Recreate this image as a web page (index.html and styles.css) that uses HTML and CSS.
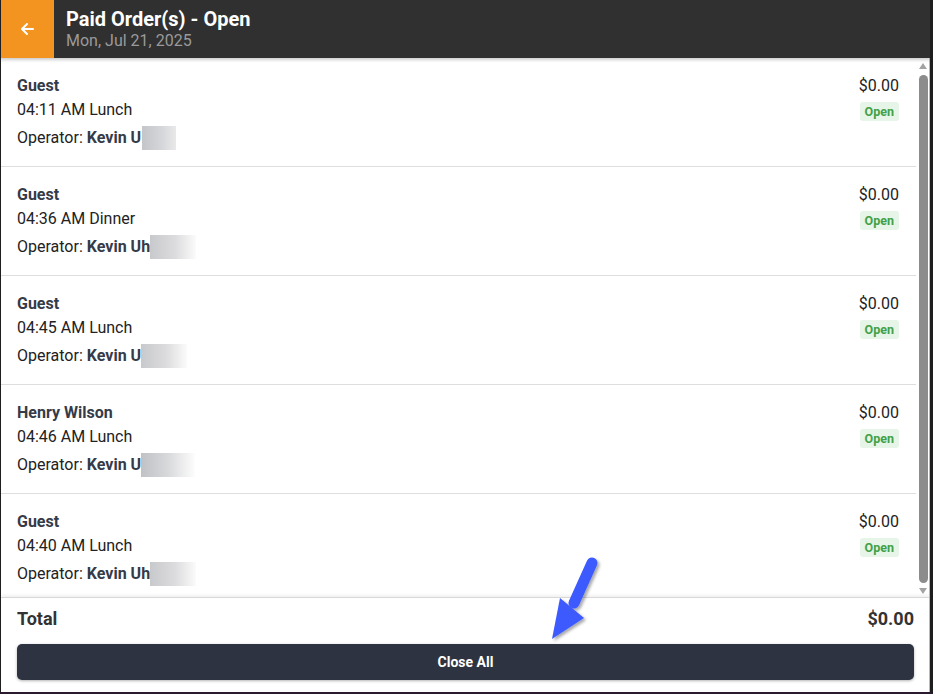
FILE: index.html
```html
<!DOCTYPE html>
<html lang="en">
<head>
    <meta charset="UTF-8">
    <meta name="viewport" content="width=device-width, initial-scale=1.0">
    <title>Paid Order(s) - Open</title>
    <link rel="stylesheet" href="styles.css">
</head>
<body>
    <div class="frame">
        <div class="header">
            <a href="#" class="back-btn">
                <svg width="14" height="14" viewBox="0 0 14 14"><path d="M13 7H2.5M7 2L2 7l5 5" fill="none" stroke="#fff" stroke-width="2" stroke-linecap="round" stroke-linejoin="round"/></svg>
            </a>
            <div class="header-text">
                <div class="title">Paid Order(s) - Open</div>
                <div class="subtitle">Mon, Jul 21, 2025</div>
            </div>
        </div>
        <div class="body">
            <div class="list">
                <div class="order">
                    <div class="order-info">
                        <div class="name">Guest</div>
                        <div class="time">04:11 AM Lunch</div>
                        <div class="operator">Operator: <b>Kevin U</b><span class="redact r1"></span></div>
                    </div>
                    <div class="order-side">
                        <div class="amount">$0.00</div>
                        <span class="badge">Open</span>
                    </div>
                </div>
                <div class="order">
                    <div class="order-info">
                        <div class="name">Guest</div>
                        <div class="time">04:36 AM Dinner</div>
                        <div class="operator">Operator: <b>Kevin Uh</b><span class="redact r2"></span></div>
                    </div>
                    <div class="order-side">
                        <div class="amount">$0.00</div>
                        <span class="badge">Open</span>
                    </div>
                </div>
                <div class="order">
                    <div class="order-info">
                        <div class="name">Guest</div>
                        <div class="time">04:45 AM Lunch</div>
                        <div class="operator">Operator: <b>Kevin U</b><span class="redact r2"></span></div>
                    </div>
                    <div class="order-side">
                        <div class="amount">$0.00</div>
                        <span class="badge">Open</span>
                    </div>
                </div>
                <div class="order">
                    <div class="order-info">
                        <div class="name">Henry Wilson</div>
                        <div class="time">04:46 AM Lunch</div>
                        <div class="operator">Operator: <b>Kevin U</b><span class="redact r3"></span></div>
                    </div>
                    <div class="order-side">
                        <div class="amount">$0.00</div>
                        <span class="badge">Open</span>
                    </div>
                </div>
                <div class="order">
                    <div class="order-info">
                        <div class="name">Guest</div>
                        <div class="time">04:40 AM Lunch</div>
                        <div class="operator">Operator: <b>Kevin Uh</b><span class="redact r2"></span></div>
                    </div>
                    <div class="order-side">
                        <div class="amount">$0.00</div>
                        <span class="badge">Open</span>
                    </div>
                </div>
            </div>
            <div class="scrollbar">
                <div class="scroll-up"></div>
                <div class="scroll-thumb"></div>
                <div class="scroll-down"></div>
            </div>
        </div>
        <div class="footer">
            <div class="total-row">
                <span>Total</span>
                <span>$0.00</span>
            </div>
            <button class="close-all">Close All</button>
        </div>
        <svg class="pointer" width="70" height="90" viewBox="0 0 70 90">
            <defs>
                <filter id="sh" x="-30%" y="-30%" width="160%" height="160%">
                    <feDropShadow dx="2" dy="2" stdDeviation="1.5" flood-color="#000" flood-opacity="0.35"/>
                </filter>
            </defs>
            <g filter="url(#sh)">
                <path d="M46 8 L28 48" stroke="#3d5afe" stroke-width="11" stroke-linecap="round" fill="none"/>
                <path d="M6 84 L14 43 L38 63 Z" fill="#3d5afe"/>
            </g>
        </svg>
    </div>
</body>
</html>
```

FILE: styles.css
```css
* {
    box-sizing: border-box;
}
body {
    margin: 0;
    font-family: Roboto, 'Liberation Sans', Arial, sans-serif;
    background: #fff;
}
.frame {
    position: relative;
    width: 933px;
    height: 694px;
    display: flex;
    flex-direction: column;
    border-left: 1px solid #1e1e1e;
    border-right: 3px solid #1e1e1e;
    border-bottom: 2px solid #2a1a2e;
    overflow: hidden;
    background: #fff;
}
.frame::after {
    content: '';
    position: absolute;
    top: 0;
    right: 0;
    width: 1px;
    height: 100%;
    background: #6fd8cf;
}
.header {
    height: 58px;
    display: flex;
    background: #303030;
    margin-left: -1px;
    box-shadow: 0 2px 3px rgba(0,0,0,0.2);
    position: relative;
    z-index: 2;
}
.back-btn {
    width: 54px;
    background: #f39320;
    display: flex;
    align-items: center;
    justify-content: center;
}
.header-text {
    padding: 7px 0 0 12px;
}
.title {
    color: #fff;
    font-size: 20px;
    font-weight: bold;
    line-height: 24px;
}
.subtitle {
    color: #9a9a9a;
    font-size: 16px;
    line-height: 19px;
}
.body {
    flex: 1;
    display: flex;
    min-height: 0;
}
.list {
    flex: 1;
    overflow: hidden;
}
.order {
    display: flex;
    justify-content: space-between;
    padding: 16px 16px 16px 16px;
    border-bottom: 1px solid #dedede;
}
.name {
    font-size: 16px;
    font-weight: bold;
    color: #353b48;
    line-height: 24px;
}
.time {
    font-size: 16px;
    color: #222;
    line-height: 24px;
}
.operator {
    font-size: 16px;
    color: #222;
    line-height: 24px;
    margin-top: 4px;
    display: flex;
    align-items: center;
}
.operator b {
    color: #353b48;
    margin-left: 4px;
}
.redact {
    display: inline-block;
    height: 24px;
    background: linear-gradient(90deg, #c4c5c9 0%, #d6d7da 60%, #e9e9ea 100%);
}
.r1 { width: 34px; margin-left: 1px; }
.r2 { width: 46px; background: linear-gradient(90deg, #c8c9cc 0%, #dcdcde 55%, #fbfbfb 100%); }
.r3 { width: 54px; background: linear-gradient(90deg, #c0c1c5 0%, #d8d9db 50%, #fdfdfd 100%); }
.order-side {
    display: flex;
    flex-direction: column;
    align-items: flex-end;
    padding-right: 1px;
}
.amount {
    font-size: 16px;
    color: #222;
    line-height: 24px;
}
.badge {
    margin-top: 4px;
    background: #e6f5e7;
    color: #43a047;
    font-size: 12.5px;
    font-weight: bold;
    line-height: 19px;
    padding: 0 5px;
    border-radius: 3px;
}
.scrollbar {
    width: 14px;
    display: flex;
    flex-direction: column;
    align-items: center;
    padding-top: 5px;
}
.scroll-up {
    width: 0;
    height: 0;
    border-left: 4px solid transparent;
    border-right: 4px solid transparent;
    border-bottom: 6px solid #a3a3a3;
}
.scroll-thumb {
    width: 9px;
    flex: 1;
    margin: 6px 0 5px;
    background: #8c8c8c;
    border-radius: 5px;
}
.scroll-down {
    width: 0;
    height: 0;
    border-left: 4px solid transparent;
    border-right: 4px solid transparent;
    border-top: 6px solid #a3a3a3;
    margin-bottom: 3px;
}
.footer {
    border-top: 1px solid #d8d8d8;
    box-shadow: 0 -2px 3px rgba(0,0,0,0.06);
    padding: 9px 16px 12px 16px;
}
.total-row {
    display: flex;
    justify-content: space-between;
    font-size: 18px;
    font-weight: bold;
    color: #333;
    line-height: 24px;
}
.close-all {
    display: block;
    width: 100%;
    margin-top: 13px;
    height: 36px;
    border: none;
    border-radius: 5px;
    background: #2d3340;
    color: #fff;
    font-family: Roboto, 'Liberation Sans', Arial, sans-serif;
    font-size: 14px;
    font-weight: bold;
    padding-bottom: 2px;
    box-shadow: 0 1px 3px rgba(0,0,0,0.3);
}
.pointer {
    position: absolute;
    left: 545px;
    top: 555px;
    z-index: 5;
}
```
